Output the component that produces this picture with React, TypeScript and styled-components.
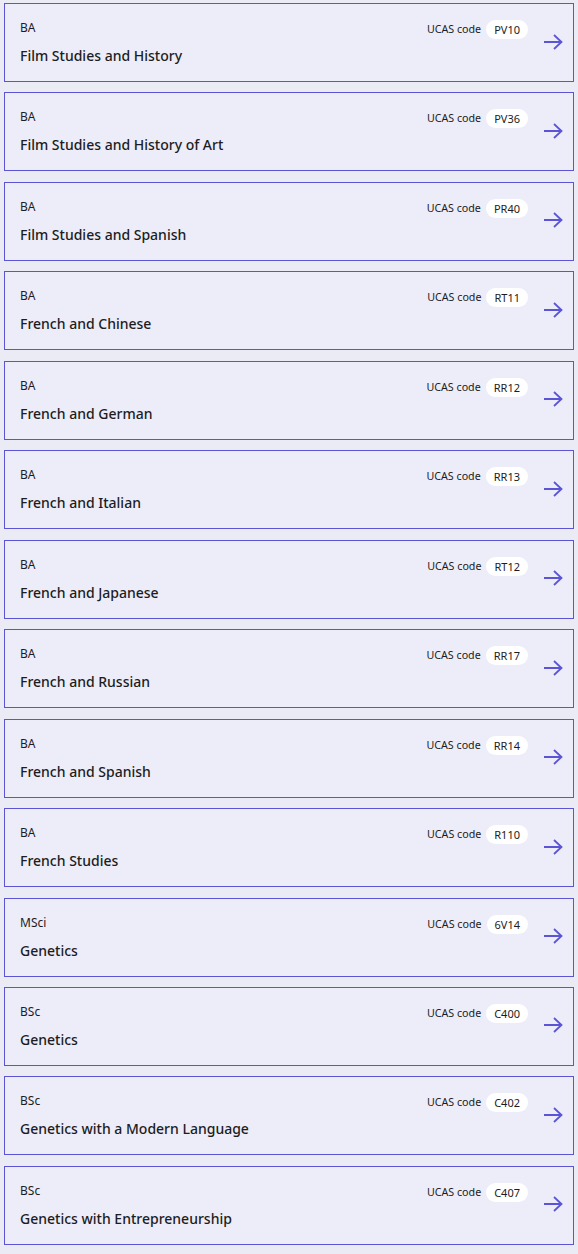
import styled, { createGlobalStyle } from "styled-components";

const GlobalStyle = createGlobalStyle`
  body {
    margin: 0;
    background: #ebebf5;
    font-family: "Noto Sans", "Open Sans", sans-serif;
    color: #1c1c22;
  }
`;

const List = styled.ul`
  list-style: none;
  margin: 0;
  padding: 3px 4px 0;
  display: flex;
  flex-direction: column;
  gap: 10.46px;
`;

const Card = styled.li`
  box-sizing: border-box;
  height: 79px;
  display: grid;
  grid-template-columns: 1fr auto auto;
  column-gap: 15px;
  padding: 0 10px 0 15px;
  border: 1px solid #5b55d6;
  background: #ededf9;
  cursor: pointer;
`;

const Info = styled.div`
  padding-top: 15px;
  display: flex;
  flex-direction: column;
  gap: 9px;
`;

const Degree = styled.span`
  font-size: 12px;
  line-height: 18px;
`;

const Title = styled.span`
  font-size: 14px;
  line-height: 20px;
  font-weight: 500;
`;

const Ucas = styled.div`
  padding-top: 16px;
  display: flex;
  align-items: flex-start;
  gap: 5px;
  font-size: 10.7px;
  line-height: 19px;
`;

const Code = styled.span`
  background: #ffffff;
  border-radius: 10px;
  padding: 0 8px;
  height: 19px;
  font-size: 11px;
`;

const Arrow = styled.svg`
  align-self: center;
  margin-top: -2px;
  width: 20px;
  height: 16px;
  color: #5b55d6;
`;

type Course = { degree: string; title: string; code: string };

const courses: Course[] = [
  { degree: "BA", title: "Film Studies and History", code: "PV10" },
  { degree: "BA", title: "Film Studies and History of Art", code: "PV36" },
  { degree: "BA", title: "Film Studies and Spanish", code: "PR40" },
  { degree: "BA", title: "French and Chinese", code: "RT11" },
  { degree: "BA", title: "French and German", code: "RR12" },
  { degree: "BA", title: "French and Italian", code: "RR13" },
  { degree: "BA", title: "French and Japanese", code: "RT12" },
  { degree: "BA", title: "French and Russian", code: "RR17" },
  { degree: "BA", title: "French and Spanish", code: "RR14" },
  { degree: "BA", title: "French Studies", code: "R110" },
  { degree: "MSci", title: "Genetics", code: "6V14" },
  { degree: "BSc", title: "Genetics", code: "C400" },
  { degree: "BSc", title: "Genetics with a Modern Language", code: "C402" },
  { degree: "BSc", title: "Genetics with Entrepreneurship", code: "C407" },
];

export default function App() {
  return (
    <>
      <GlobalStyle />
      <List>
        {courses.map((c) => (
          <Card key={c.degree + c.code}>
            <Info>
              <Degree>{c.degree}</Degree>
              <Title>{c.title}</Title>
            </Info>
            <Ucas>
              <span>UCAS code</span>
              <Code>{c.code}</Code>
            </Ucas>
            <Arrow viewBox="0 0 20 16" fill="none" stroke="currentColor" strokeWidth="1.8">
              <path d="M1 8h17.5M11 1l7.5 7-7.5 7" />
            </Arrow>
          </Card>
        ))}
      </List>
    </>
  );
}
